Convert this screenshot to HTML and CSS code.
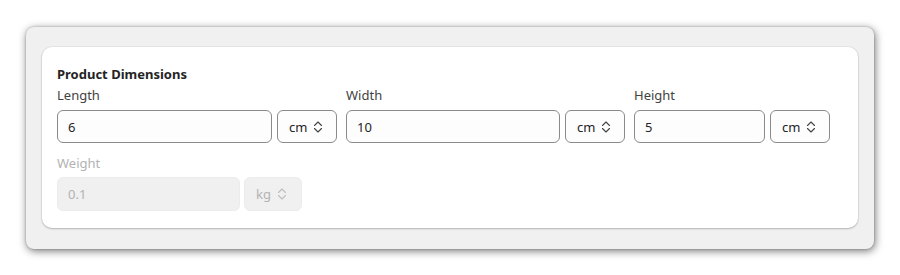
FILE: index.html
```html
<!DOCTYPE html>
<html lang="en">
<head>
<meta charset="utf-8">
<title>Product Dimensions</title>
<link rel="stylesheet" href="styles.css">
</head>
<body>
<div class="panel">
  <section class="card">
    <h2 class="title">Product Dimensions</h2>
    <div class="grid">
      <div class="field">
        <label class="label">Length</label>
        <div class="controls">
          <div class="input">6</div>
          <div class="unit">cm <svg class="chev" viewBox="0 0 10 14" width="10" height="14"><path d="M1.5 5.5 L5 2 L8.5 5.5 M1.5 8.5 L5 12 L8.5 8.5"/></svg></div>
        </div>
      </div>
      <div class="field">
        <label class="label">Width</label>
        <div class="controls">
          <div class="input">10</div>
          <div class="unit">cm <svg class="chev" viewBox="0 0 10 14" width="10" height="14"><path d="M1.5 5.5 L5 2 L8.5 5.5 M1.5 8.5 L5 12 L8.5 8.5"/></svg></div>
        </div>
      </div>
      <div class="field">
        <label class="label">Height</label>
        <div class="controls">
          <div class="input">5</div>
          <div class="unit">cm <svg class="chev" viewBox="0 0 10 14" width="10" height="14"><path d="M1.5 5.5 L5 2 L8.5 5.5 M1.5 8.5 L5 12 L8.5 8.5"/></svg></div>
        </div>
      </div>
    </div>
    <div class="field weight disabled">
      <label class="label">Weight</label>
      <div class="controls">
        <div class="input">0.1</div>
        <div class="unit">kg <svg class="chev" viewBox="0 0 10 14" width="10" height="14"><path d="M1.5 5.5 L5 2 L8.5 5.5 M1.5 8.5 L5 12 L8.5 8.5"/></svg></div>
      </div>
    </div>
  </section>
</div>
</body>
</html>
```

FILE: styles.css
```css
* { box-sizing: border-box; }

html, body {
  height: 100%;
}

body {
  margin: 0;
  padding-top: 27px;
  background: #ffffff;
  font-family: "Noto Sans", "Open Sans", sans-serif;
  font-size: 13px;
  color: #242424;
}

.panel {
  margin: 0 0 0 26px;
  width: 848px;
  height: 222px;
  padding: 20px 16px 21px 16px;
  background: #f0f0f0;
  border-radius: 8px;
  box-shadow: 1px 2px 8px rgba(0, 0, 0, 0.55), 0 0 2px rgba(0, 0, 0, 0.25);
}

.card {
  height: 181px;
  padding: 18px 15px 16px 15px;
  background: #ffffff;
  border-radius: 10px;
  box-shadow: 0 1px 2px rgba(0, 0, 0, 0.22), 0 0 0 1px rgba(0, 0, 0, 0.04);
}

.title {
  margin: 0;
  font-size: 13px;
  line-height: 18px;
  font-weight: 700;
  color: #242424;
}

.grid {
  display: grid;
  grid-template-columns: 280px 279px 196px;
  column-gap: 9px;
  margin-top: 3px;
}

.field {
  display: flex;
  flex-direction: column;
}

.label {
  display: block;
  line-height: 18px;
  color: #424242;
  margin-bottom: 6px;
}

.controls {
  display: flex;
  gap: 5px;
}

.input {
  flex: 1;
  height: 33px;
  padding: 0 10px;
  display: flex;
  align-items: center;
  border: 1px solid #8a8a8a;
  border-radius: 6px;
  background: #fdfdfd;
  color: #242424;
}

.unit {
  width: 60px;
  height: 33px;
  padding: 0 0 0 11px;
  display: flex;
  align-items: center;
  gap: 6px;
  border: 1px solid #8a8a8a;
  border-radius: 6px;
  background: #fdfdfd;
  color: #242424;
}

.chev {
  fill: none;
  stroke: #424242;
  stroke-width: 1.1;
  stroke-linecap: round;
  stroke-linejoin: round;
}

.weight {
  width: 245px;
  margin-top: 11px;
}

.weight .label {
  margin-bottom: 5px;
}

.weight .controls {
  gap: 4px;
}

.weight .input {
  height: 34px;
}

.weight .unit {
  width: 58px;
  height: 34px;
}

.disabled .label { color: #b3b3b3; }

.disabled .input,
.disabled .unit {
  background: #f0f0f0;
  border-color: #ececec;
  color: #b3b3b3;
}

.disabled .chev { stroke: #bdbdbd; }
```
